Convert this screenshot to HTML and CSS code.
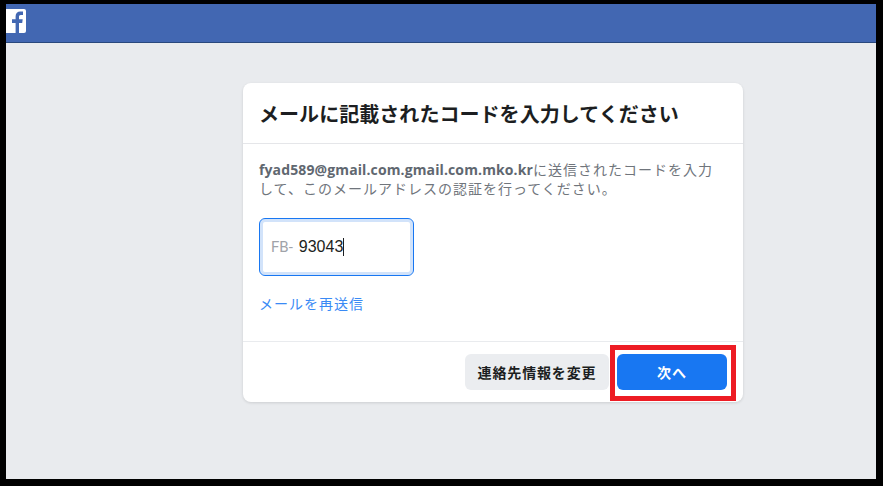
FILE: index.html
```html
<!DOCTYPE html>
<html lang="ja">
<head>
  <meta charset="UTF-8">
  <title>メールに記載されたコードを入力してください</title>
  <link rel="stylesheet" href="styles.css">
</head>
<body>

<div class="screen">
  <div class="topbar">
    <div class="logo">
      <svg width="20" height="24" viewBox="0 0 20 24"><path fill="#4267b2" d="M13 24V14h3.200l.5-3.800H13V7.800c0-1.100.4-1.900 1.900-1.900H17V2.600C16.600 2.500 15.500 2.400 14.300 2.400c-2.800 0-4.700 1.700-4.700 4.800v3H6V14h3.600v10z"/></svg>
    </div>
  </div>

  <div class="card">
    <h2 class="card-title">メールに記載されたコードを入力してください</h2>
    <div class="card-body">
      <p class="desc"><b>fyad589@gmail.com.gmail.com.mko.kr</b>に送信されたコードを入力して、このメールアドレスの認証を行ってください。</p>
      <div class="code-input">
        <span class="prefix">FB-</span>
        <span class="code">93043</span><span class="caret"></span>
      </div>
      <a class="resend" href="#">メールを再送信</a>
    </div>
    <div class="card-foot">
      <button class="btn btn-gray">連絡先情報を変更</button>
      <button class="btn btn-blue">次へ</button>
      <div class="highlight"></div>
    </div>
  </div>
</div>

</body>
</html>
```

FILE: styles.css
```css
* { box-sizing: border-box; }
html, body { height: 100%; }
body { margin: 0; padding: 4px 7px 7px 6px; background: #000; font-family: "Liberation Sans", Arial, "Noto Sans CJK JP", sans-serif; }

.screen { height: 100%; background: #e9ebee; overflow: hidden; }
.topbar { height: 39px; padding-top: 5px; background: #4267b2; border-bottom: 1px solid #29487d; }
.logo { width: 20px; height: 24px; background: #fff; border-radius: 0 2px 2px 0; }
.logo svg { display: block; }

.card { position: relative; width: 500px; height: 319px; margin: 40px 0 0 237px; background: #fff; border-radius: 8px; box-shadow: 0 1px 3px rgba(0,0,0,.12); }
.card-title { height: 61px; margin: 0; padding: 0 16px; font-size: 20px; line-height: 64px; font-weight: 700; color: #1c1e21; border-bottom: 1px solid #e5e6e9; letter-spacing: .05px; }
.card-body { height: 198px; padding: 16px 16px 0; border-bottom: 1px solid #e9ebee; }
.desc { margin: 0; width: 460px; font-size: 14px; line-height: 19px; color: #70757c; letter-spacing: 1px; }
.desc b { font-family: "Open Sans", "Liberation Sans", sans-serif; letter-spacing: .12px; color: #606770; }

.code-input { display: flex; align-items: center; width: 155px; height: 58px; margin-top: 19px; padding-left: 11px; border: 1px solid #1877f2; border-radius: 6px; box-shadow: inset 0 0 0 3px #d2e3fa; background: #fff; }
.prefix { font-family: Roboto, sans-serif; font-size: 15px; color: #a0a3a9; margin-right: 6px; }
.code { font-size: 16px; color: #1c1e21; }
.caret { width: 1px; height: 18px; background: #1c1e21; }

.resend { display: block; margin-top: 19px; font-size: 14px; line-height: 19px; color: #3a8af5; text-decoration: none; letter-spacing: 1px; }

.card-foot { position: relative; display: flex; justify-content: flex-end; gap: 8px; padding: 12px 16px 0 0; }
.btn { height: 36px; border: 0; border-radius: 6px; font-family: inherit; font-size: 14px; font-weight: 700; }
.btn-gray { width: 144px; background: #ebedf0; color: #1c1e21; letter-spacing: .85px; }
.btn-blue { width: 110px; background: #1877f2; color: #fff; letter-spacing: 1px; }
.highlight { position: absolute; left: 367px; top: 3px; width: 126px; height: 56px; border: 5px solid #ed1c24; }
```
